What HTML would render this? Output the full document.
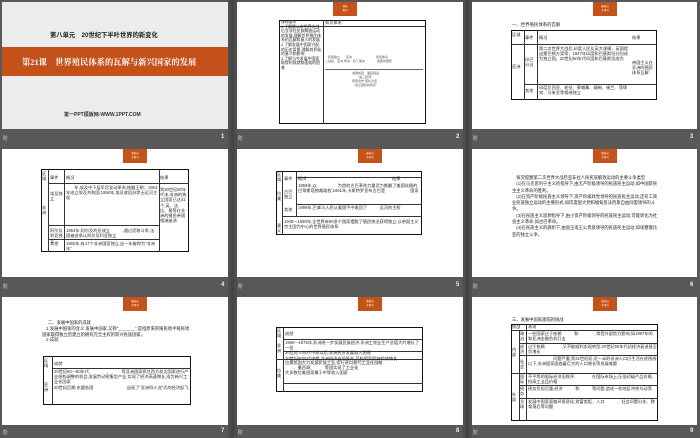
<!DOCTYPE html>
<html><head><meta charset="utf-8"><style>
*{margin:0;padding:0;box-sizing:border-box}
body{width:700px;height:438px;background:#585858;position:relative;overflow:hidden;font-family:"Liberation Sans","Noto Sans CJK SC",sans-serif}
.sep{position:absolute;top:0;width:9px;height:438px;background:#4d4d4d}
.sep:after{content:"";position:absolute;left:3px;top:0;width:3px;height:100%;background:#444}
.s{position:absolute;background:#fff;overflow:hidden}
.a{position:absolute}
.lab{position:absolute;color:#d8d8d8;font-size:5px}
.num{position:absolute;color:#eee;font-size:6px;font-weight:bold}
.badge{position:absolute;background:#c4531a;color:#fff;font-size:2.5px;text-align:center;line-height:4px;padding-top:3px}
.t{position:absolute;border:1.2px solid #111}
.tx{position:absolute;font-size:4.2px;line-height:5.2px;color:#2a2a2a;white-space:nowrap;overflow:hidden}
.hl{position:absolute;height:0.8px;background:#333}
.vl{position:absolute;width:0.8px;background:#333}
</style></head><body>
<div class="sep" style="left:228px"></div>
<div class="sep" style="left:463px"></div>

<!-- Slide 1 -->
<div class="s" style="left:2px;top:2px;width:226px;height:127px;background:#ececec">
 <div class="a" style="left:48px;top:28px;font-size:6.3px;font-weight:bold;color:#222;white-space:nowrap">第八单元　20世纪下半叶世界的新变化</div>
 <div class="a" style="left:0;top:45px;width:226px;height:29px;background:#c4501a"></div>
 <div class="a" style="left:20px;top:54px;font-size:8.3px;font-weight:bold;color:#fff;font-family:'Liberation Serif','Noto Serif CJK SC',serif;white-space:nowrap">第21课　世界殖民体系的瓦解与新兴国家的发展</div>
 <div class="a" style="left:62px;top:109px;font-size:5px;font-weight:bold;color:#333;white-space:nowrap">第一PPT模板网-WWW.1PPT.COM</div>
</div>
<div class="lab" style="left:3px;top:135px">阶</div><div class="num" style="left:221px;top:134px">1</div>

<!-- Slide 2 -->
<div class="s" style="left:237px;top:2px;width:226px;height:127px">
 <div class="badge" style="left:96px;top:0;width:24px;height:14px">课前<br>预习</div>
 <div class="t" style="left:42px;top:18px;width:147px;height:104px"></div>
 <div class="hl" style="left:42px;top:24px;width:147px"></div>
 <div class="vl" style="left:86px;top:18px;height:104px"></div>
 <div class="tx" style="left:44px;top:18px;width:42px;white-space:normal;line-height:4.6px;font-size:3.9px">课标要求<br>1.了解第二次世界大战后亚非拉民族解放运动的发展,理解世界殖民体系的瓦解和意义的发展<br>2.了解发展中国家兴起的历史背景,理解其积极的意义和影响<br>3.了解当今发展中国家取得的成就和面临的困难</div>
 <div class="tx" style="left:88px;top:18px">知识体系</div>
 <div class="tx" style="left:88px;top:53px;width:100px;font-size:3px;line-height:4px;white-space:normal;color:#555">　民族独立　　亚洲　　　　　　　　殖民体系<br>二战后　亚洲 非洲　拉丁美洲　　　　发展中国家</div>
 <div class="hl" style="left:88px;top:67px;width:98px;background:#666"></div>
 <div class="tx" style="left:115px;top:69px;width:70px;font-size:3px;line-height:4px;white-space:normal;color:#555">发展成就　面临挑战<br>　　"第三世界"<br>南南合作 南北对话<br>　建立国际新秩序</div>
</div>
<div class="lab" style="left:238px;top:135px">阶</div><div class="num" style="left:456px;top:134px">2</div>

<!-- Slide 3 -->
<div class="s" style="left:472px;top:2px;width:225px;height:127px">
 <div class="badge" style="left:121px;top:0;width:24px;height:14px">课前自<br>主预习</div>
 <div class="tx" style="left:40px;top:20px;font-size:4.4px;color:#222">一、世界殖民体系的瓦解</div>
 <div class="t" style="left:39px;top:28px;width:146px;height:70px"></div>
 <div class="hl" style="left:39px;top:42px;width:146px"></div>
 <div class="hl" style="left:52px;top:82px;width:133px"></div>
 <div class="vl" style="left:52px;top:28px;height:70px"></div>
 <div class="vl" style="left:65px;top:28px;height:70px"></div>
 <div class="tx" style="left:40px;top:30px;width:12px;white-space:normal">区域</div>
 <div class="tx" style="left:53px;top:33px">事件</div><div class="tx" style="left:67px;top:33px">概况</div><div class="tx" style="left:160px;top:33px">结果</div>
 <div class="tx" style="left:40px;top:62px;width:12px;white-space:normal">亚洲</div>
 <div class="tx" style="left:53px;top:55px;width:12px;white-space:normal">印巴分治</div>
 <div class="tx" style="left:67px;top:44px;width:90px;white-space:normal">第二次世界大战后,印度人民反英大规模，英国提出蒙巴顿方案等；1947年印度和巴基斯坦分别成为独立国。20世纪50年代印度和巴基斯坦成为</div>
 <div class="tx" style="left:160px;top:58px;width:24px;white-space:normal">帝国主义在亚洲的殖民体系瓦解</div>
 <div class="tx" style="left:53px;top:86px">其他</div>
 <div class="tx" style="left:67px;top:83px;width:95px;white-space:normal">印度尼西亚、老挝、柬埔寨、缅甸、锡兰、菲律宾、马来亚等相继独立</div>
</div>
<div class="lab" style="left:473px;top:135px">阶</div><div class="num" style="left:690px;top:134px">3</div>

<!-- Slide 4 -->
<div class="s" style="left:2px;top:149px;width:226px;height:128px">
 <div class="badge" style="left:121px;top:0;width:24px;height:14px">课前自<br>主预习</div>
 <div class="t" style="left:39px;top:20px;width:148px;height:83px"></div>
 <div class="hl" style="left:46px;top:34px;width:111px"></div>
 <div class="hl" style="left:46px;top:76px;width:111px"></div>
 <div class="hl" style="left:46px;top:90px;width:111px"></div>
 <div class="hl" style="left:157px;top:34px;width:30px"></div>
 <div class="vl" style="left:46px;top:20px;height:83px"></div>
 <div class="vl" style="left:62px;top:20px;height:83px"></div>
 <div class="vl" style="left:157px;top:20px;height:83px"></div>
 <div class="tx" style="left:40px;top:22px;width:6px;white-space:normal">区域</div>
 <div class="tx" style="left:48px;top:26px">事件</div><div class="tx" style="left:64px;top:26px">概况</div><div class="tx" style="left:158px;top:26px">结果</div>
 <div class="tx" style="left:40px;top:56px;width:6px;white-space:normal">非洲</div>
 <div class="tx" style="left:48px;top:42px;width:14px;white-space:normal">埃及独立</div>
 <div class="tx" style="left:64px;top:36px;width:92px;white-space:normal">　　年,埃及中下层军官发动革命,推翻王朝；1953年成立埃及共和国;1956年,埃及收回苏伊士运河主权</div>
 <div class="tx" style="left:48px;top:79px;width:14px;white-space:normal">阿尔及利亚独立</div>
 <div class="tx" style="left:64px;top:79px;width:92px;white-space:normal">1954年,阿尔及利亚成立　　　,通过武装斗争,法国被迫承认阿尔及利亚独立</div>
 <div class="tx" style="left:48px;top:92px">其他</div>
 <div class="tx" style="left:64px;top:92px;width:92px;white-space:normal">1960年,有17个非洲国家独立,这一年被称为"非洲年"</div>
 <div class="tx" style="left:158px;top:38px;width:28px;white-space:normal">到20世纪60年代末,非洲的独立国家已达41个,英、法、比、葡等在非洲的殖民帝国相继崩溃</div>
</div>
<div class="lab" style="left:3px;top:283px">阶</div><div class="num" style="left:221px;top:282px">4</div>

<!-- Slide 5 -->
<div class="s" style="left:237px;top:149px;width:226px;height:128px">
 <div class="badge" style="left:121px;top:0;width:24px;height:14px">课前自<br>主预习</div>
 <div class="t" style="left:39px;top:22px;width:146px;height:64px"></div>
 <div class="vl" style="left:45px;top:22px;height:64px"></div>
 <div class="vl" style="left:59px;top:22px;height:45px"></div>
 <div class="hl" style="left:59px;top:28px;width:126px"></div>
 <div class="hl" style="left:59px;top:55px;width:126px"></div>
 <div class="hl" style="left:45px;top:67px;width:140px"></div>
 <div class="tx" style="left:40px;top:23px;width:6px;white-space:normal">区域</div>
 <div class="tx" style="left:47px;top:27px">事件</div><div class="tx" style="left:61px;top:27px">概况</div><div class="tx" style="left:155px;top:27px">结果</div>
 <div class="tx" style="left:40px;top:42px;width:6px;white-space:normal">拉美</div>
 <div class="tx" style="left:47px;top:40px;width:12px;white-space:normal">古巴独立</div>
 <div class="tx" style="left:61px;top:34px;width:122px;white-space:normal">1959年,以　　　　　为首的古巴革命力量武力推翻了美国扶植的巴蒂斯塔独裁政权;1961年,卡斯特罗宣布古巴是　　　　　　国家</div>
 <div class="tx" style="left:47px;top:58px">其他</div>
 <div class="tx" style="left:61px;top:56px;width:122px;white-space:normal">1999年,巴拿马人民从美国手中收回了　　　运河的主权</div>
 <div class="tx" style="left:40px;top:74px;width:6px;white-space:normal">意义</div>
 <div class="tx" style="left:47px;top:70px;width:137px;white-space:normal">1945—1990年,全世界有90多个国家摆脱了殖民统治获得独立,以帝国主义宗主国为中心的世界殖民体系</div>
</div>
<div class="lab" style="left:238px;top:283px">阶</div><div class="num" style="left:456px;top:282px">5</div>

<!-- Slide 6 -->
<div class="s" style="left:472px;top:149px;width:225px;height:128px">
 <div class="badge" style="left:121px;top:0;width:24px;height:14px">课前自<br>主预习</div>
 <div class="tx" style="left:40px;top:26px;width:148px;white-space:normal;font-size:4.3px;line-height:6.3px;color:#222">　探究提醒第二次世界大战后亚非拉人民民族解放运动的主要斗争类型<br>　(1)在马克思列宁主义的指导下,由无产阶级领导的民族民主运动,如中国新民主主义革命的胜利。<br>　(2)在资产阶级民族主义领导下,资产阶级政党领导的民族民主运动,还有工商业民族独立运动的主要形式,如印度国大党和缅甸反法西斯自由同盟领导的斗争。<br>　(3)在民族主义思想指导下,由小资产阶级领导的民族民主运动,可能转化为社会主义革命,如古巴革命。<br>　(4)在民族主义的旗帜下,由国王或王公贵族领导的民族民主运动,如埃塞俄比亚的独立斗争。</div>
</div>
<div class="lab" style="left:473px;top:283px">阶</div><div class="num" style="left:690px;top:282px">6</div>

<!-- Slide 7 -->
<div class="s" style="left:2px;top:297px;width:226px;height:128px">
 <div class="badge" style="left:121px;top:0;width:24px;height:14px">课前自<br>主预习</div>
 <div class="tx" style="left:46px;top:23px;font-size:4.3px;color:#222">二、发展中国家的成就</div>
 <div class="tx" style="left:40px;top:29px;width:148px;white-space:normal;font-size:4.3px;line-height:5.6px;color:#222">　1.发展中国家的含义:发展中国家,又称"<span style="color:#c00">_______</span>",是指原来的殖民地半殖民地国家取得独立后建立的拥有完全主权的新兴民族国家。<br>　2.成就</div>
 <div class="t" style="left:41px;top:59px;width:148px;height:49px"></div>
 <div class="vl" style="left:50px;top:59px;height:49px"></div>
 <div class="hl" style="left:50px;top:71px;width:139px"></div>
 <div class="tx" style="left:42px;top:61px;width:7px;white-space:normal">区域</div>
 <div class="tx" style="left:52px;top:64px">成就</div>
 <div class="tx" style="left:42px;top:85px;width:7px;white-space:normal">亚洲</div>
 <div class="tx" style="left:52px;top:72px;width:136px;white-space:normal">20世纪60—80年代,　　　　、　　　等亚洲国家抓住西方发达国家进行产业结构调整的机会,发展劳动密集型产业,实现了经济高速增长,成为新兴工业化国家<br>20世纪后期,东盟各国　　　　　　　　出现了"亚洲四小龙"式的经济起飞</div>
</div>
<div class="lab" style="left:3px;top:429px">阶</div><div class="num" style="left:221px;top:428px">7</div>

<!-- Slide 8 -->
<div class="s" style="left:237px;top:297px;width:226px;height:128px">
 <div class="badge" style="left:121px;top:0;width:24px;height:14px">课前自<br>主预习</div>
 <div class="t" style="left:39px;top:30px;width:147px;height:65px"></div>
 <div class="vl" style="left:46px;top:30px;height:65px"></div>
 <div class="hl" style="left:46px;top:42px;width:140px"></div>
 <div class="hl" style="left:39px;top:62px;width:147px"></div>
 <div class="hl" style="left:46px;top:54px;width:140px"></div>
 <div class="hl" style="left:46px;top:86px;width:140px"></div>
 <div class="tx" style="left:40px;top:31px;width:6px;white-space:normal">区域</div>
 <div class="tx" style="left:48px;top:34px">成就</div>
 <div class="tx" style="left:40px;top:46px;width:6px;white-space:normal">非洲</div>
 <div class="tx" style="left:48px;top:43px;width:136px;white-space:normal">1960—1975年,非洲进一步发展民族经济,非洲工农业生产总值大约增长了一倍<br>20世纪70年代中期以后,非洲经济发展陷入困境<br>20世纪90年代中期,非洲经济出现复苏,某些国家保持较快增长</div>
 <div class="tx" style="left:40px;top:71px;width:6px;white-space:normal">拉美</div>
 <div class="tx" style="left:48px;top:63px;width:136px;white-space:normal">拉美各国大力发展民族工业,实行进口替代工业化战略<br>　　、墨西哥、　　　等国实现了工业化<br>大多数拉美国家属于中等收入国家</div>
</div>
<div class="lab" style="left:238px;top:429px">阶</div><div class="num" style="left:456px;top:428px">8</div>

<!-- Slide 9 -->
<div class="s" style="left:472px;top:297px;width:225px;height:128px">
 <div class="badge" style="left:121px;top:0;width:24px;height:14px">课前自<br>主预习</div>
 <div class="tx" style="left:40px;top:20px;font-size:4.3px;color:#222">三、发展中国家面临的挑战</div>
 <div class="t" style="left:39px;top:27px;width:147px;height:97px"></div>
 <div class="hl" style="left:39px;top:33px;width:147px"></div>
 <div class="vl" style="left:47px;top:33px;height:91px"></div>
 <div class="vl" style="left:54px;top:27px;height:97px"></div>
 <div class="hl" style="left:47px;top:46px;width:139px"></div>
 <div class="hl" style="left:47px;top:58px;width:139px"></div>
 <div class="hl" style="left:39px;top:76px;width:147px"></div>
 <div class="hl" style="left:47px;top:88px;width:139px"></div>
 <div class="hl" style="left:47px;top:101px;width:139px"></div>
 <div class="tx" style="left:40px;top:27px">挑战</div><div class="tx" style="left:56px;top:27px">表现</div>
 <div class="tx" style="left:40px;top:50px;width:7px;white-space:normal">内部</div>
 <div class="tx" style="left:40px;top:95px;width:7px;white-space:normal">外部</div>
 <div class="tx" style="left:48px;top:34px;width:6px;white-space:normal">政治</div>
 <div class="tx" style="left:48px;top:47px;width:6px;white-space:normal">经济</div>
 <div class="tx" style="left:48px;top:62px;width:6px;white-space:normal">社会</div>
 <div class="tx" style="left:48px;top:77px;width:6px;white-space:normal">国际</div>
 <div class="tx" style="left:48px;top:89px;width:6px;white-space:normal">债务</div>
 <div class="tx" style="left:48px;top:102px;width:6px;white-space:normal">全球</div>
 <div class="tx" style="left:56px;top:34px;width:129px;white-space:normal">一些国家过于依赖　　　和　　　　,常受外部势力影响,如1997年的　　　　　　和亚洲金融危机打击</div>
 <div class="tx" style="left:56px;top:47px;width:129px;white-space:normal">过于依赖　　　　,又不能顺利实现转型;20世纪90年代初经济衰退甚至负增长</div>
 <div class="tx" style="left:56px;top:59px;width:129px;white-space:normal">　　　　　　问题严重,到21世纪初,近一半的非洲人口仍生活在贫困线以下,非洲国家面临着巨大的人口增长等发展难题</div>
 <div class="tx" style="left:56px;top:77px;width:129px;white-space:normal">不平等的国际经济旧秩序:　　　　在国际市场上,压低初级产品价格,抬高工业品价格</div>
 <div class="tx" style="left:56px;top:89px;width:129px;white-space:normal">债务负担沉重,经济　　　和　　　等问题,造成一些地区冲突与动荡</div>
 <div class="tx" style="left:56px;top:102px;width:129px;white-space:normal">发展中国家面临环境恶化,贫富差距、人口　　　、社会问题分化、教育落后等问题</div>
</div>
<div class="lab" style="left:473px;top:429px">阶</div><div class="num" style="left:690px;top:428px">9</div>
</body></html>
